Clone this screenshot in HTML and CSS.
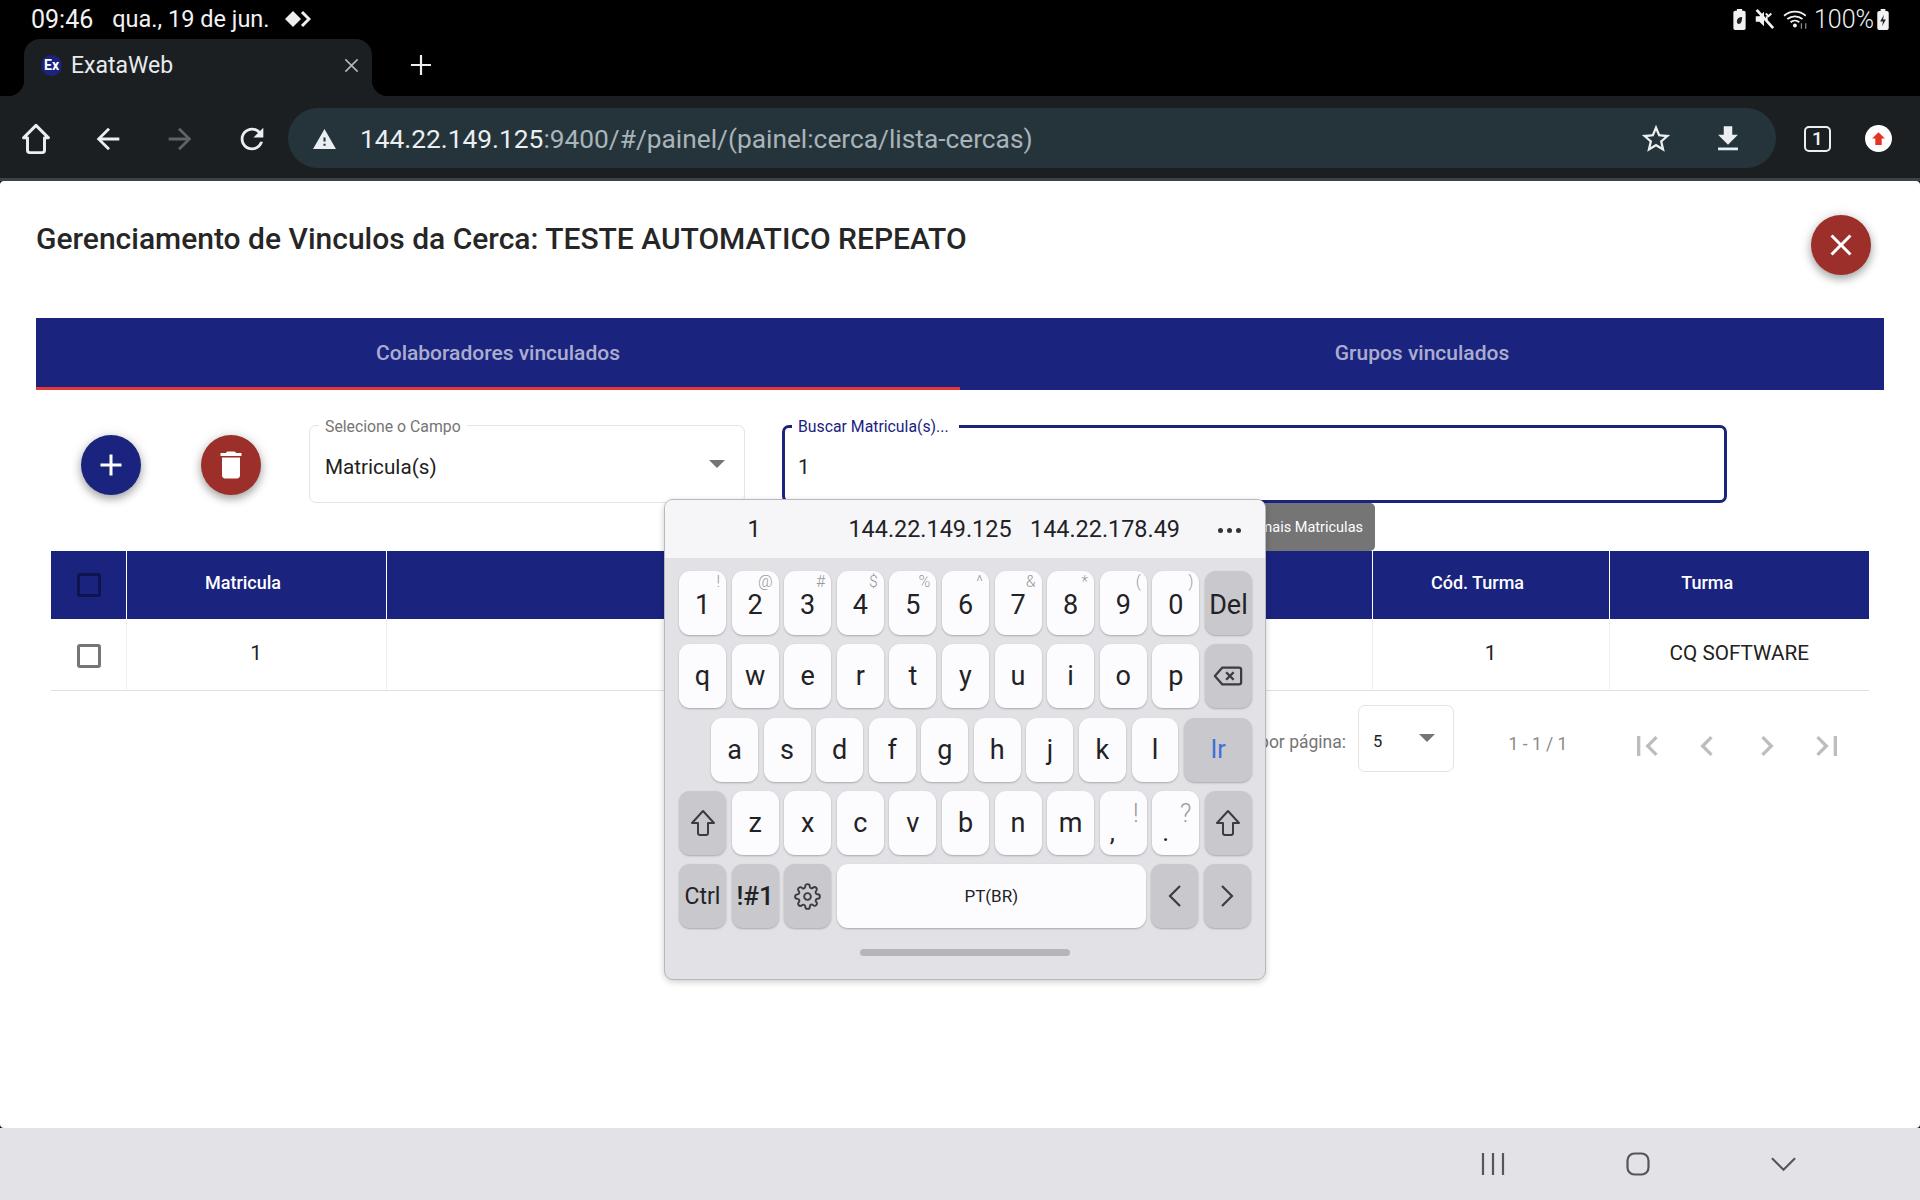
FILE: index.html
```html
<!DOCTYPE html>
<html lang="pt-BR">
<head>
    <meta charset="UTF-8">
    <meta name="viewport" content="width=device-width, initial-scale=1.0">
    <title>ExataWeb</title>
    <link rel="stylesheet" href="styles.css">
</head>
<body>
    <div class="status-bar">
        <div class="status-left">
            <span class="status-time">09:46</span>
            <span>qua., 19 de jun.</span>
            <svg class="status-cast" viewBox="0 0 26 18"><path d="M8 1l8 8-8 8-8-8z" fill="#eee"/><path d="M17 2l7 7-7 7" fill="none" stroke="#eee" stroke-width="3"/></svg>
        </div>
        <div class="status-right">
            <svg class="icon-batt" viewBox="0 0 14 24"><path d="M4 0h6v2h2a2 2 0 0 1 2 2v18a2 2 0 0 1-2 2H2a2 2 0 0 1-2-2V4a2 2 0 0 1 2-2h2z" fill="#f2f2f2"/><path d="M10 9c-4 0-6 2-6 5 0 2 1 3 2 3 3 0 4-4 4-8z" fill="#222"/></svg>
            <svg class="icon-mute" viewBox="0 0 24 24"><path d="M3 9v6h4l5 5V4L7 9z" fill="#f2f2f2"/><path d="M14 6l3 3 3-3M15 9v4" stroke="#f2f2f2" stroke-width="2" fill="none"/><path d="M4 2l18 20" stroke="#f2f2f2" stroke-width="3"/></svg>
            <svg class="icon-wifi" viewBox="0 0 24 20"><path d="M1 7a15 15 0 0 1 20 0M4 10a11 11 0 0 1 14 0M7 13a6 6 0 0 1 8 0" fill="none" stroke="#f2f2f2" stroke-width="1.6"/><circle cx="11" cy="16" r="1.8" fill="#f2f2f2"/><path d="M17 14v5M21 14v5" stroke="#888" stroke-width="1.2"/></svg>
            <span class="status-pct">100%</span>
            <svg class="icon-charge" viewBox="0 0 12 22"><path d="M3.5 0h5v2H10a2 2 0 0 1 2 2v16a2 2 0 0 1-2 2H2a2 2 0 0 1-2-2V4a2 2 0 0 1 2-2h1.5z" fill="#f2f2f2"/><path d="M7 6l-4 7h3l-1 5 4-7H6z" fill="#222"/></svg>
        </div>
    </div>

    <div class="tab-strip">
        <div class="tab">
            <span class="favicon">Ex</span>
            <span class="tab-title">ExataWeb</span>
            <svg class="tab-close" viewBox="0 0 24 24"><path d="M5 5l14 14M19 5L5 19" stroke="#b4b8bb" stroke-width="1.8" fill="none"/></svg>
        </div>
        <svg class="tab-add" viewBox="0 0 24 24"><path d="M12 2v20M2 12h20" stroke="#eceff1" stroke-width="2.2" fill="none"/></svg>
    </div>

    <div class="toolbar">
        <button class="tool-btn">
            <svg viewBox="0 0 30 30"><path d="M15 3L4 14h3.5v11a2 2 0 0 0 2 2h11a2 2 0 0 0 2-2V14H26z" fill="none" stroke="#eceff1" stroke-width="2.6" stroke-linejoin="round"/></svg>
        </button>
        <button class="tool-btn">
            <svg viewBox="0 0 24 24"><path d="M20 11H7.83l5.59-5.59L12 4l-8 8 8 8 1.41-1.41L7.83 13H20v-2z" fill="#eceff1"/></svg>
        </button>
        <button class="tool-btn">
            <svg viewBox="0 0 24 24"><path d="M4 11h12.17l-5.59-5.59L12 4l8 8-8 8-1.41-1.41L16.17 13H4v-2z" fill="#5f6366"/></svg>
        </button>
        <button class="tool-btn">
            <svg viewBox="0 0 24 24"><path d="M17.65 6.35C16.2 4.9 14.21 4 12 4c-4.42 0-7.99 3.58-7.99 8s3.57 8 7.99 8c3.73 0 6.84-2.55 7.73-6h-2.08c-.82 2.33-3.04 4-5.65 4-3.31 0-6-2.69-6-6s2.69-6 6-6c1.66 0 3.14.69 4.22 1.78L13 11h7V4l-2.35 2.35z" fill="#eceff1"/></svg>
        </button>
        <div class="url-bar">
            <svg class="url-warn" viewBox="0 0 24 24"><path d="M1 21h22L12 2 1 21zm12-3h-2v-2h2v2zm0-4h-2v-4h2v4z" fill="#eceff1"/></svg>
            <span class="url-text"><span class="url-host">144.22.149.125</span>:9400/#/painel/(painel:cerca/lista-cercas)</span>
            <svg class="url-star" viewBox="0 0 24 24"><path d="M22 9.24l-7.19-.62L12 2 9.19 8.63 2 9.24l5.46 4.73L5.82 21 12 17.27 18.18 21l-1.63-7.03L22 9.24zM12 15.4l-3.76 2.27 1-4.28-3.32-2.88 4.38-.38L12 6.1l1.71 4.04 4.38.38-3.32 2.88 1 4.28L12 15.4z" fill="#eceff1"/></svg>
            <svg class="url-down" viewBox="0 0 24 24"><path d="M19 9h-4V3H9v6H5l7 7 7-7zM5 18v2h14v-2H5z" fill="#eceff1"/></svg>
        </div>
        <span class="tab-count">1</span>
        <span class="profile">
            <svg viewBox="0 0 16 16"><path d="M8 2l6 6h-3v6H5V8H2z" fill="#e53225"/></svg>
        </span>
    </div>

    <div class="page-frame">
        <main class="content">
            <div class="title-row">
                <h1 class="title">Gerenciamento de Vinculos da Cerca: TESTE AUTOMATICO REPEATO</h1>
                <button class="fab fab-red fab-close">
                    <svg viewBox="0 0 24 24"><path d="M19 6.41L17.59 5 12 10.59 6.41 5 5 6.41 10.59 12 5 17.59 6.41 19 12 13.41 17.59 19 19 17.59 13.41 12z" fill="#fff"/></svg>
                </button>
            </div>

            <div class="tabs">
                <div class="tab-item tab-active">Colaboradores vinculados</div>
                <div class="tab-item">Grupos vinculados</div>
            </div>

            <div class="filters">
                <button class="fab fab-blue fab-add">
                    <svg viewBox="0 0 24 24"><path d="M19 13h-6v6h-2v-6H5v-2h6V5h2v6h6v2z" fill="#fff"/></svg>
                </button>
                <button class="fab fab-red fab-del">
                    <svg viewBox="0 0 24 24"><path d="M6 19c0 1.1.9 2 2 2h8c1.1 0 2-.9 2-2V7H6v12zM19 4h-3.5l-1-1h-5l-1 1H5v2h14V4z" fill="#fff"/></svg>
                </button>
                <div class="field field-select">
                    <label class="field-label">Selecione o Campo</label>
                    <span class="field-value">Matricula(s)</span>
                    <span class="arrow field-arrow"></span>
                </div>
                <div class="field field-search">
                    <label class="field-label">Buscar Matricula(s)...</label>
                    <span class="field-value">1</span>
                </div>
            </div>

            <div class="tooltip">mais Matriculas</div>

            <table class="grid">
                <colgroup>
                    <col class="col-check">
                    <col class="col-mat">
                    <col class="col-nome">
                    <col class="col-cod">
                    <col class="col-turma">
                </colgroup>
                <thead>
                    <tr>
                        <th><span class="check check-head"></span></th>
                        <th class="th-mat">Matricula</th>
                        <th></th>
                        <th class="th-cod">Cód. Turma</th>
                        <th class="th-turma">Turma</th>
                    </tr>
                </thead>
                <tbody>
                    <tr>
                        <td><span class="check"></span></td>
                        <td>1</td>
                        <td></td>
                        <td>1</td>
                        <td>CQ SOFTWARE</td>
                    </tr>
                </tbody>
            </table>

            <div class="paginator">
                <span class="page-label">por página:</span>
                <div class="page-size">
                    <span>5</span>
                    <span class="arrow"></span>
                </div>
                <span class="page-range">1 - 1 / 1</span>
                <button class="page-btn"><svg viewBox="0 0 24 24"><path d="M18.41 16.59L13.82 12l4.59-4.59L17 6l-6 6 6 6zM6 6h2v12H6z"/></svg></button>
                <button class="page-btn"><svg viewBox="0 0 24 24"><path d="M15.41 7.41L14 6l-6 6 6 6 1.41-1.41L10.83 12z"/></svg></button>
                <button class="page-btn"><svg viewBox="0 0 24 24"><path d="M10 6L8.59 7.41 13.17 12l-4.58 4.59L10 18l6-6z"/></svg></button>
                <button class="page-btn"><svg viewBox="0 0 24 24"><path d="M5.59 7.41L10.18 12l-4.59 4.59L7 18l6-6-6-6zM16 6h2v12h-2z"/></svg></button>
            </div>

            <!-- teclado flutuante -->
            <div class="keyboard">
                <div class="suggestions">
                    <span class="sug sug-1">1</span>
                    <span class="sug sug-2">144.22.149.125</span>
                    <span class="sug sug-3">144.22.178.49</span>
                    <span class="sug-more"><i></i><i></i><i></i></span>
                </div>
                <div class="keys">
                    <div class="key-row">
                        <span class="key">1<small>!</small></span>
                        <span class="key">2<small>@</small></span>
                        <span class="key">3<small>#</small></span>
                        <span class="key">4<small>$</small></span>
                        <span class="key">5<small>%</small></span>
                        <span class="key">6<small>^</small></span>
                        <span class="key">7<small>&amp;</small></span>
                        <span class="key">8<small>*</small></span>
                        <span class="key">9<small>(</small></span>
                        <span class="key">0<small>)</small></span>
                        <span class="key key-fn">Del</span>
                    </div>
                    <div class="key-row">
                        <span class="key">q</span>
                        <span class="key">w</span>
                        <span class="key">e</span>
                        <span class="key">r</span>
                        <span class="key">t</span>
                        <span class="key">y</span>
                        <span class="key">u</span>
                        <span class="key">i</span>
                        <span class="key">o</span>
                        <span class="key">p</span>
                        <span class="key key-fn">
                            <svg class="key-icon" viewBox="0 0 32 24"><path d="M10 3h18a2 2 0 0 1 2 2v14a2 2 0 0 1-2 2H10l-8-9z" fill="none" stroke="#3c3c40" stroke-width="2.4" stroke-linejoin="round"/><path d="M14 8l8 8M22 8l-8 8" stroke="#3c3c40" stroke-width="2.6"/></svg>
                        </span>
                    </div>
                    <div class="key-row key-row-mid">
                        <span class="key">a</span>
                        <span class="key">s</span>
                        <span class="key">d</span>
                        <span class="key">f</span>
                        <span class="key">g</span>
                        <span class="key">h</span>
                        <span class="key">j</span>
                        <span class="key">k</span>
                        <span class="key">l</span>
                        <span class="key key-fn key-go">Ir</span>
                    </div>
                    <div class="key-row">
                        <span class="key key-fn">
                            <svg class="key-shift" viewBox="0 0 26 28"><path d="M13 2L2 14h6v10a2 2 0 0 0 2 2h6a2 2 0 0 0 2-2V14h6z" fill="none" stroke="#3c3c40" stroke-width="2" stroke-linejoin="round"/></svg>
                        </span>
                        <span class="key">z</span>
                        <span class="key">x</span>
                        <span class="key">c</span>
                        <span class="key">v</span>
                        <span class="key">b</span>
                        <span class="key">n</span>
                        <span class="key">m</span>
                        <span class="key key-punct"><b>,</b><small>!</small></span>
                        <span class="key key-punct"><b>.</b><small>?</small></span>
                        <span class="key key-fn">
                            <svg class="key-shift" viewBox="0 0 26 28"><path d="M13 2L2 14h6v10a2 2 0 0 0 2 2h6a2 2 0 0 0 2-2V14h6z" fill="none" stroke="#3c3c40" stroke-width="2" stroke-linejoin="round"/></svg>
                        </span>
                    </div>
                    <div class="key-row">
                        <span class="key key-fn key-ctrl">Ctrl</span>
                        <span class="key key-fn key-sym">!#1</span>
                        <span class="key key-fn">
                            <svg class="key-gear" viewBox="0 0 24 24" fill="none" stroke="#3c3c40" stroke-width="1.7"><circle cx="12" cy="12" r="3"/><path d="M19.4 15a1.65 1.65 0 0 0 .33 1.82l.06.06a2 2 0 0 1 0 2.83 2 2 0 0 1-2.83 0l-.06-.06a1.65 1.65 0 0 0-1.82-.33 1.65 1.65 0 0 0-1 1.51V21a2 2 0 0 1-2 2 2 2 0 0 1-2-2v-.09A1.65 1.65 0 0 0 9 19.4a1.65 1.65 0 0 0-1.82.33l-.06.06a2 2 0 0 1-2.83 0 2 2 0 0 1 0-2.83l.06-.06a1.65 1.65 0 0 0 .33-1.82 1.65 1.65 0 0 0-1.51-1H3a2 2 0 0 1-2-2 2 2 0 0 1 2-2h.09A1.65 1.65 0 0 0 4.6 9a1.65 1.65 0 0 0-.33-1.82l-.06-.06a2 2 0 0 1 0-2.83 2 2 0 0 1 2.83 0l.06.06a1.65 1.65 0 0 0 1.82.33H9a1.65 1.65 0 0 0 1-1.51V3a2 2 0 0 1 2-2 2 2 0 0 1 2 2v.09a1.65 1.65 0 0 0 1 1.51 1.65 1.65 0 0 0 1.82-.33l.06-.06a2 2 0 0 1 2.83 0 2 2 0 0 1 0 2.83l-.06.06a1.65 1.65 0 0 0-.33 1.82V9a1.65 1.65 0 0 0 1.51 1H21a2 2 0 0 1 2 2 2 2 0 0 1-2 2h-.09a1.65 1.65 0 0 0-1.51 1z"/></svg>
                        </span>
                        <span class="key key-space">PT(BR)</span>
                        <span class="key key-fn">
                            <svg class="key-chev" viewBox="0 0 14 24"><path d="M12 2L2 12l10 10" fill="none" stroke="#3c3c40" stroke-width="2.2"/></svg>
                        </span>
                        <span class="key key-fn">
                            <svg class="key-chev" viewBox="0 0 14 24"><path d="M2 2l10 10L2 22" fill="none" stroke="#3c3c40" stroke-width="2.2"/></svg>
                        </span>
                    </div>
                </div>
                <div class="key-handle"></div>
            </div>
        </main>
    </div>

    <div class="nav-bar">
        <svg class="nav-recent" viewBox="0 0 24 24"><path d="M2 1v22M12 1v22M22 1v22" stroke="#55565a" stroke-width="2.2" fill="none"/></svg>
        <svg class="nav-home" viewBox="0 0 24 24"><rect x="1.5" y="1.5" width="21" height="21" rx="7" fill="none" stroke="#55565a" stroke-width="2.2"/></svg>
        <svg class="nav-back" viewBox="0 0 26 16"><path d="M1 2l12 12L25 2" stroke="#55565a" stroke-width="2.2" fill="none"/></svg>
    </div>
</body>
</html>
```

FILE: styles.css
```css
* {
    box-sizing: border-box;
}
body {
    font-family: Roboto, Arial, sans-serif;
    margin: 0;
    width: 1920px;
    height: 1200px;
    display: flex;
    flex-direction: column;
    overflow: hidden;
    background: #000;
    color: #212121;
}
button {
    border: none;
    background: none;
    padding: 0;
}

/* barra de status */
.status-bar {
    height: 38px;
    padding: 0 31px;
    display: flex;
    align-items: center;
    justify-content: space-between;
    background: #000;
    color: #f2f2f2;
    font-size: 23.5px;
    font-weight: 400;
}
.status-left {
    display: flex;
    align-items: center;
}
.status-time {
    margin-right: 19px;
    font-size: 25px;
}
.status-cast {
    width: 26px;
    height: 18px;
    margin-left: 15px;
}
.status-right {
    display: flex;
    align-items: center;
}
.icon-batt {
    width: 13px;
    height: 21px;
    margin-right: 7px;
}
.icon-mute {
    width: 22px;
    height: 22px;
    margin-right: 8px;
}
.icon-wifi {
    width: 26px;
    height: 22px;
    margin-right: 5px;
}
.status-pct {
    font-size: 25px;
    font-weight: 300;
}
.icon-charge {
    width: 12px;
    height: 21px;
    margin-left: 3px;
}

/* abas do navegador */
.tab-strip {
    height: 58px;
    display: flex;
    align-items: stretch;
    padding-left: 24px;
    background: #000;
}
.tab {
    position: relative;
    width: 348px;
    margin-top: 1px;
    padding: 0 10px 4px 17px;
    display: flex;
    align-items: center;
    background: #1b1f22;
    border-radius: 16px 16px 0 0;
    color: #e8eaed;
}
.tab::before,
.tab::after {
    content: "";
    position: absolute;
    bottom: 0;
    width: 16px;
    height: 16px;
}
.tab::before {
    left: -16px;
    background: radial-gradient(circle at 0 0, transparent 16px, #1b1f22 16.5px);
}
.tab::after {
    right: -16px;
    background: radial-gradient(circle at 100% 0, transparent 16px, #1b1f22 16.5px);
}
.favicon {
    width: 21px;
    height: 21px;
    border-radius: 50%;
    background: #1a237e;
    color: #fff;
    font-size: 14px;
    font-weight: 700;
    line-height: 21px;
    text-align: center;
}
.tab-title {
    flex: 1;
    margin-left: 9px;
    font-size: 23px;
}
.tab-close {
    width: 21px;
    height: 21px;
}
.tab-add {
    width: 24px;
    height: 24px;
    margin: 15px 0 0 37px;
}

.toolbar {
    height: 85px;
    padding: 12px 27px 0 0;
    display: flex;
    align-items: flex-start;
    background: #1b1f22;
    border-bottom: 3px solid #3a4349;
}
.tool-btn {
    width: 72px;
    height: 60px;
    padding-top: 2px;
    display: flex;
    align-items: center;
    justify-content: center;
}
.tool-btn svg {
    width: 34px;
    height: 34px;
}
.url-bar {
    width: 1488px;
    height: 60px;
    padding: 2px 31px 0 24px;
    display: flex;
    align-items: center;
    background: #25343b;
    border-radius: 30px;
    color: #a9b4b9;
    font-size: 26.3px;
}
.url-warn {
    width: 25px;
    height: 25px;
}
.url-text {
    flex: 1;
    margin-left: 23px;
}
.url-host {
    color: #eceff1;
}
.url-star {
    width: 34px;
    height: 34px;
    margin-right: 38px;
}
.url-down {
    width: 34px;
    height: 34px;
}
.tab-count {
    width: 27px;
    height: 26px;
    margin: 18px 0 0 28px;
    border: 2.5px solid #eceff1;
    border-radius: 5px;
    color: #eceff1;
    font-size: 19px;
    font-weight: 500;
    line-height: 21px;
    text-align: center;
}
.profile {
    width: 27px;
    height: 27px;
    margin: 17px 0 0 34px;
    padding: 5px;
    display: block;
    background: #fff;
    border-radius: 50%;
}
.profile svg {
    display: block;
    width: 17px;
    height: 17px;
}

/* painel */
.page-frame {
    flex: 1;
    min-height: 0;
    background: #000;
}
.content {
    position: relative;
    height: 100%;
    background: #fff;
    border-radius: 4px;
}
.title-row {
    height: 137px;
    padding: 0 49px 0 36px;
    display: flex;
    align-items: flex-start;
    justify-content: space-between;
}
.title {
    margin: 41px 0 0;
    font-size: 30px;
    font-weight: 500;
    line-height: 34px;
    color: #262626;
}
.fab {
    width: 60px;
    height: 60px;
    display: flex;
    align-items: center;
    justify-content: center;
    flex-shrink: 0;
    border-radius: 50%;
    box-shadow: 0 4px 8px rgba(0, 0, 0, 0.3), 0 1px 14px rgba(0, 0, 0, 0.12);
}
.fab svg {
    width: 36px;
    height: 36px;
}
.fab-red {
    background: #9c2f2a;
}
.fab-blue {
    background: #1a237e;
}
.fab-close {
    margin-top: 34px;
}
.tabs {
    height: 72px;
    margin: 0 36px;
    display: flex;
    background: #1a237e;
}
.tab-item {
    flex: 1;
    padding-bottom: 2px;
    display: flex;
    align-items: center;
    justify-content: center;
    color: rgba(255, 255, 255, 0.65);
    font-size: 21px;
    font-weight: 500;
}
.tab-active {
    border-bottom: 3px solid #e53935;
    padding: 1px 0 0;
}

.filters {
    margin-top: 35px;
    padding-left: 81px;
    display: flex;
    align-items: center;
}
.fab-add,
.fab-del {
    margin-top: 2px;
}
.fab-add {
    margin-right: 60px;
}
.fab-del {
    margin-right: 48px;
}
.field {
    position: relative;
    height: 78px;
    padding: 0 15px;
    display: flex;
    align-items: center;
    border: 1px solid #e3e3e3;
    border-radius: 7px;
}
.field-select {
    width: 436px;
}
.field-search {
    width: 945px;
    margin-left: 37px;
    border: 3px solid #1a237e;
    padding: 0 13px;
}
.field-label {
    position: absolute;
    top: -8px;
    left: 9px;
    padding: 0 6px;
    background: #fff;
    color: #757575;
    font-size: 15.8px;
    line-height: 18px;
}
.field-search .field-label {
    top: -10px;
    left: 7px;
    padding: 0 10px 0 6px;
    color: #1a237e;
}
.field-value {
    margin-top: 6px;
    font-size: 20.7px;
}
.arrow {
    display: block;
    width: 0;
    height: 0;
    border-left: 8px solid transparent;
    border-right: 8px solid transparent;
    border-top: 8px solid #757575;
}
.field-arrow {
    position: absolute;
    top: 34px;
    right: 19px;
}
.tooltip {
    position: absolute;
    top: 322px;
    left: 1200px;
    width: 175px;
    height: 48px;
    padding-right: 12px;
    display: flex;
    align-items: center;
    justify-content: flex-end;
    background: #757575;
    border-radius: 5px;
    color: #fff;
    font-size: 14.5px;
}

.grid {
    width: 1818px;
    margin: 48px 0 0 51px;
    border-collapse: collapse;
    table-layout: fixed;
}
.col-check {
    width: 75px;
}
.col-mat {
    width: 260px;
}
.col-nome {
    width: 986px;
}
.col-cod {
    width: 237px;
}
.col-turma {
    width: 260px;
}
.grid th {
    height: 68px;
    padding: 0 0 5px;
    background: #1a237e;
    border-left: 1px solid #fff;
    color: #fff;
    font-size: 18px;
    font-weight: 500;
}
.grid th:first-child,
.grid td:first-child {
    border-left: none;
}
.grid .th-mat,
.grid .th-cod {
    padding-right: 26px;
}
.grid .th-turma {
    padding-right: 64px;
}
.grid td {
    height: 71px;
    padding: 0 0 2px;
    border-left: 1px solid #eee;
    border-bottom: 1px solid #e0e0e0;
    font-size: 20.7px;
    text-align: center;
}
.check {
    display: block;
    width: 24px;
    height: 24px;
    margin: 5px auto 0 26px;
    border: 3px solid #757575;
    border-radius: 3px;
}
.grid td .check {
    margin-top: 5px;
}
.check-head {
    border-color: #0e1450;
}

.paginator {
    width: 1869px;
    padding: 14px 12px 0 0;
    display: flex;
    align-items: flex-start;
    justify-content: flex-end;
    color: #757575;
    font-size: 17.5px;
}
.page-label {
    margin: 27px 12px 0 0;
}
.page-size {
    position: relative;
    width: 96px;
    height: 67px;
    padding: 26px 0 0 14px;
    border: 1px solid #e3e3e3;
    border-radius: 7px;
    color: #212121;
    font-size: 16.5px;
}
.page-size .arrow {
    position: absolute;
    top: 28px;
    right: 18px;
}
.page-range {
    width: 163px;
    margin-top: 29px;
    padding-left: 5px;
    text-align: center;
    color: #8a8a8a;
}
.page-btn {
    width: 60px;
    height: 60px;
    margin-top: 11px;
    display: flex;
    align-items: center;
    justify-content: center;
}
.page-btn svg {
    width: 40px;
    height: 40px;
    fill: #bdbdbd;
}

/* teclado */
.keyboard {
    position: absolute;
    top: 318px;
    left: 664px;
    width: 602px;
    height: 481px;
    background: #e2e2e6;
    border: 1px solid #b8b8bc;
    border-radius: 9px;
    box-shadow: 0 2px 6px rgba(0, 0, 0, 0.2);
    overflow: hidden;
    color: #222226;
}
.suggestions {
    position: relative;
    height: 58px;
    background: #f6f6f8;
    font-size: 23.4px;
}
.sug {
    position: absolute;
    top: 0;
    line-height: 58px;
    transform: translateX(-50%);
}
.sug-1 {
    left: 89px;
}
.sug-2 {
    left: 265px;
}
.sug-3 {
    left: 440px;
}
.sug-more {
    position: absolute;
    top: 28px;
    left: 553px;
    display: flex;
    gap: 4px;
}
.sug-more i {
    width: 5px;
    height: 5px;
    border-radius: 50%;
    background: #333;
}
.keys {
    padding: 13px 13px 0 14px;
    display: flex;
    flex-direction: column;
    gap: 9.25px;
}
.key-row {
    display: flex;
    gap: 5.6px;
    height: 64px;
}
.key-row:first-child .key {
    padding-top: 4px;
}
.key-row-mid {
    padding-left: 32px;
}
.key {
    position: relative;
    width: 47px;
    display: flex;
    align-items: center;
    justify-content: center;
    background: #fcfcfe;
    border-radius: 11px;
    box-shadow: 0 1px 2px rgba(0, 0, 0, 0.25);
    font-size: 27px;
}
.key small {
    position: absolute;
    top: 1px;
    right: 6px;
    color: #9a9a9e;
    font-size: 16px;
    font-weight: 300;
}
.key-fn {
    background: #c8c8cd;
}
.key-go {
    width: 68px;
    color: #3f6fd8;
    font-size: 25px;
}
.key-punct b {
    position: absolute;
    left: 10px;
    bottom: 10px;
    font-weight: 400;
    font-size: 26px;
    line-height: 26px;
}
.key-punct small {
    top: 8px;
    right: 8px;
    font-size: 25px;
}
.key-space {
    width: 309px;
    font-size: 17px;
}
.key-ctrl {
    font-size: 23px;
}
.key-sym {
    font-size: 26px;
    font-weight: 500;
}
.key-icon {
    width: 30px;
    height: 28px;
}
.key-shift {
    width: 26px;
    height: 28px;
}
.key-gear {
    width: 27px;
    height: 27px;
}
.key-chev {
    width: 14px;
    height: 24px;
}
.key-handle {
    width: 210px;
    height: 7px;
    margin: 21px auto 0;
    background: #b5b5ba;
    border-radius: 4px;
}

/* barra inferior */
.nav-bar {
    height: 72px;
    padding-left: 1481px;
    display: flex;
    align-items: center;
    background: #e3e3e7;
}
.nav-recent {
    width: 24px;
    height: 24px;
}
.nav-home {
    width: 24px;
    height: 24px;
    margin-left: 121px;
}
.nav-back {
    width: 25px;
    height: 16px;
    margin-left: 121px;
}
```
